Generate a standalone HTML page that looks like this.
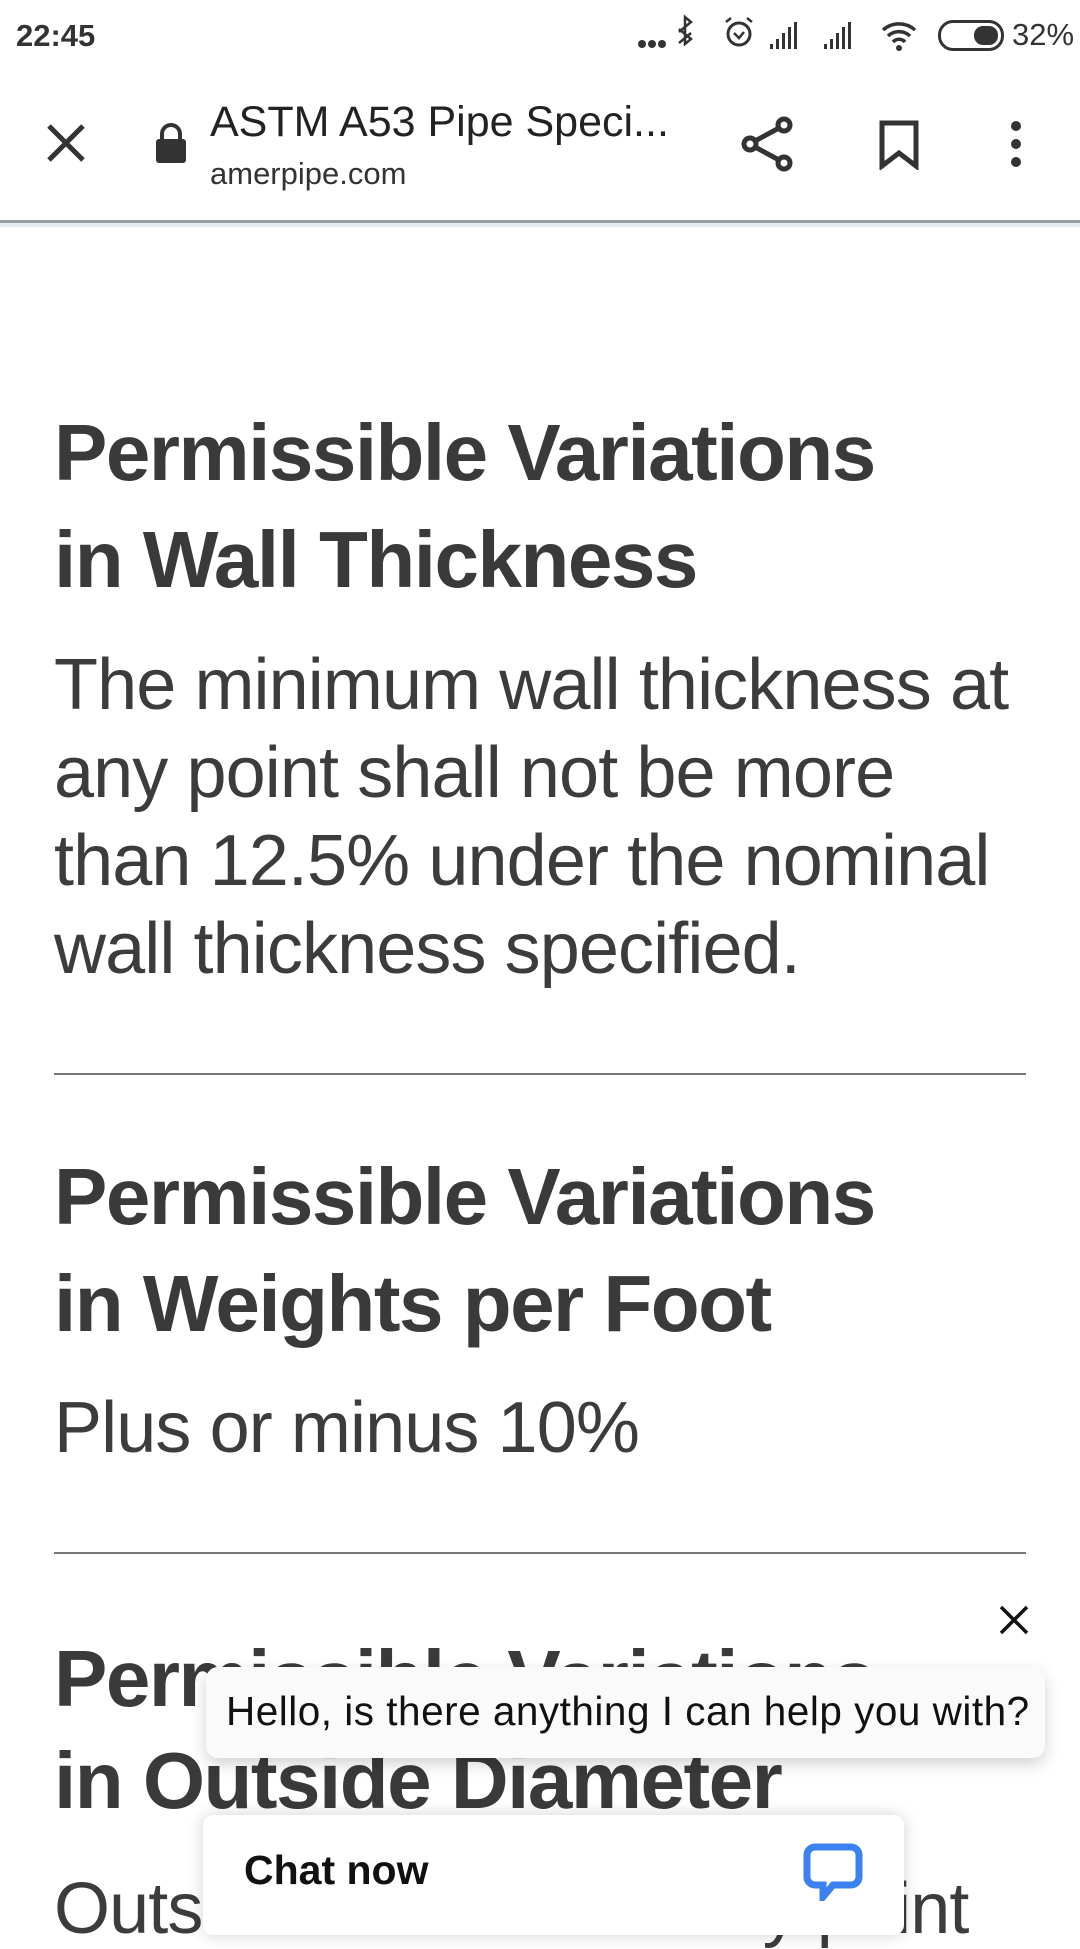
<!DOCTYPE html>
<html><head><meta charset="utf-8"><style>
*{margin:0;padding:0;box-sizing:border-box}
body{width:1080px;height:1920px;overflow:hidden;background:#fff;position:relative;font-family:"Liberation Sans",sans-serif;color:#3c3c3c}
.a{position:absolute;white-space:nowrap}
.h{font-size:80px;font-weight:bold;letter-spacing:-1.5px;color:#3a3a3a;line-height:1}
.p{font-size:72px;letter-spacing:-0.9px;color:#3c3c3c;line-height:1}
.hr{position:absolute;left:54px;width:972px;height:2px;background:#777}
</style></head><body>
<div class="a" style="left:16px;top:18px;font-size:31px;font-weight:bold;color:#333">22:45</div>
<svg class="a" style="left:636px;top:12px" width="300" height="50" viewBox="0 0 300 50">
<g fill="#333"><circle cx="6" cy="32" r="4"/><circle cx="16" cy="32" r="4"/><circle cx="26" cy="32" r="4"/></g>
<path d="M43 17L55 27L49 32V5L55 10L43 20M43 31L55 21" fill="none" stroke="#333" stroke-width="2.5"/>
<circle cx="103" cy="22" r="11" fill="none" stroke="#333" stroke-width="3"/><path d="M98 21l5 5 5-6M90 10l5-4M116 10l-5-4" fill="none" stroke="#333" stroke-width="2.5"/>
<g fill="#333"><rect x="134" y="32" width="3" height="5"/><rect x="140" y="27" width="3" height="10"/><rect x="146" y="21" width="3" height="16"/><rect x="152" y="15" width="3" height="22"/><rect x="158" y="10" width="3" height="27"/>
<rect x="188" y="32" width="3" height="5"/><rect x="194" y="27" width="3" height="10"/><rect x="200" y="21" width="3" height="16"/><rect x="206" y="15" width="3" height="22"/><rect x="212" y="10" width="3" height="27"/></g>
<path d="M247 18a24 24 0 0132 0M252 24a16 16 0 0122 0M257 30a8 8 0 0112 0" fill="none" stroke="#333" stroke-width="3.5"/><circle cx="263" cy="36" r="3" fill="#333"/>
</svg>
<div class="a" style="left:938px;top:20px;width:66px;height:31px;border:3px solid #333;border-radius:15px"><div style="position:absolute;right:3px;top:3px;width:24px;height:19px;background:#333;border-radius:9px"></div></div>
<div class="a" style="left:1012px;top:17px;font-size:31px;color:#333">32%</div>

<svg class="a" style="left:46px;top:123px" width="40" height="40" viewBox="0 0 40 40"><path d="M3 3L37 37M37 3L3 37" stroke="#333" stroke-width="5"/></svg>
<svg class="a" style="left:154px;top:122px" width="34" height="42" viewBox="0 0 34 42"><path d="M8 18V12a9 9 0 0118 0v6" fill="none" stroke="#333" stroke-width="4"/><rect x="2" y="17" width="30" height="24" rx="3" fill="#333"/></svg>
<div class="a" style="left:210px;top:98px;font-size:43px;color:#222">ASTM A53 Pipe Speci...</div>
<div class="a" style="left:210px;top:156px;font-size:31px;color:#333">amerpipe.com</div>
<svg class="a" style="left:740px;top:116px" width="56" height="56" viewBox="0 0 56 56"><circle cx="44" cy="9" r="6" fill="none" stroke="#333" stroke-width="5"/><circle cx="10" cy="28" r="6" fill="none" stroke="#333" stroke-width="5"/><circle cx="44" cy="47" r="6" fill="none" stroke="#333" stroke-width="5"/><path d="M15 25L39 12M15 31L39 44" stroke="#333" stroke-width="5"/></svg>
<svg class="a" style="left:877px;top:120px" width="44" height="50" viewBox="0 0 44 50"><path d="M5 3H39V46L22 33L5 46Z" fill="none" stroke="#333" stroke-width="5"/></svg>
<svg class="a" style="left:1006px;top:120px" width="20" height="50"><circle cx="10" cy="6" r="5" fill="#333"/><circle cx="10" cy="24" r="5" fill="#333"/><circle cx="10" cy="42" r="5" fill="#333"/></svg>
<div class="a" style="left:0;top:220px;width:1080px;height:3px;background:#9a9ea4"></div>
<div class="a" style="left:0;top:223px;width:1080px;height:4px;background:#e6ecf3"></div>

<div class="a h" style="left:54px;top:413px">Permissible Variations</div>
<div class="a h" style="left:54px;top:520px">in Wall Thickness</div>
<div class="a p" style="left:54px;top:649px">The minimum wall thickness at</div>
<div class="a p" style="left:54px;top:737px">any point shall not be more</div>
<div class="a p" style="left:54px;top:825px">than 12.5% under the nominal</div>
<div class="a p" style="left:54px;top:913px">wall thickness specified.</div>
<div class="hr" style="top:1073px"></div>
<div class="a h" style="left:54px;top:1157px">Permissible Variations</div>
<div class="a h" style="left:54px;top:1264px">in Weights per Foot</div>
<div class="a p" style="left:54px;top:1392px">Plus or minus 10%</div>
<div class="hr" style="top:1552px"></div>
<div class="a h" style="left:54px;top:1639px">Permissible Variations</div>
<div class="a h" style="left:54px;top:1741px">in Outside Diameter</div>
<div class="a p" style="left:54px;top:1873px">Outside diameter at any point</div>

<svg class="a" style="left:998px;top:1604px" width="32" height="32" viewBox="0 0 32 32"><path d="M3 3L29 29M29 3L3 29" stroke="#111" stroke-width="3.5"/></svg>
<div class="a" style="left:206px;top:1667px;width:839px;height:91px;background:#fafafa;border-radius:12px;box-shadow:0 6px 16px rgba(0,0,0,.18);font-size:40.5px;color:#111;padding:21px 0 0 20px;letter-spacing:0.5px">Hello, is there anything I can help you with?</div>
<div class="a" style="left:203px;top:1815px;width:701px;height:120px;background:#fff;border-radius:10px;box-shadow:0 0 16px rgba(0,0,0,.18)">
<div class="a" style="left:41px;top:32px;font-size:41px;font-weight:bold;color:#111">Chat now</div>
<svg class="a" style="left:600px;top:28px" width="60" height="58" viewBox="0 0 60 58"><path d="M12 4H48a8 8 0 018 8V34a8 8 0 01-8 8H30L20 54V42H12a8 8 0 01-8-8V12a8 8 0 018-8Z" fill="none" stroke="#3b82f0" stroke-width="7"/></svg>
</div>
</body></html>
